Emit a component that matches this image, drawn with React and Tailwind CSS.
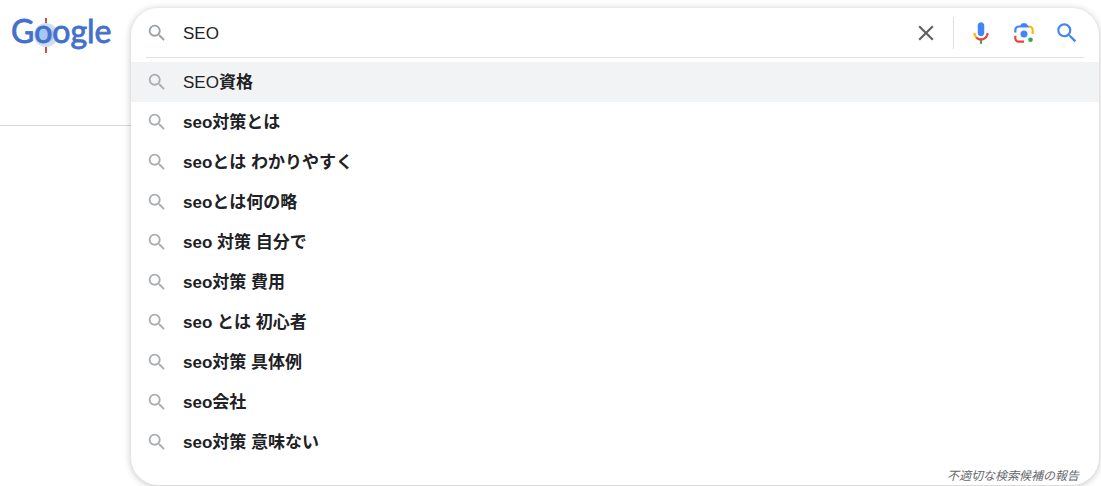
import React, { useState } from 'react';

// "typed" is the part the user entered, "rest" is the completion
const suggestions = [
  { typed: 'SEO', rest: '資格' },
  { rest: 'seo対策とは' },
  { rest: 'seoとは わかりやすく' },
  { rest: 'seoとは何の略' },
  { rest: 'seo 対策 自分で' },
  { rest: 'seo対策 費用' },
  { rest: 'seo とは 初心者' },
  { rest: 'seo対策 具体例' },
  { rest: 'seo会社' },
  { rest: 'seo対策 意味ない' },
];

const SearchIcon = ({ className }) => (
  <svg viewBox="0 0 24 24" className={className} fill="currentColor" aria-hidden="true">
    <path d="M15.5 14h-.79l-.28-.27A6.471 6.471 0 0 0 16 9.5 6.5 6.5 0 1 0 9.5 16c1.61 0 3.09-.59 4.23-1.57l.27.28v.79l5 4.99L20.49 19l-4.99-5zm-6 0C7.01 14 5 11.99 5 9.5S7.01 5 9.5 5 14 7.01 14 9.5 11.99 14 9.5 14z" />
  </svg>
);

const CloseIcon = () => (
  <svg viewBox="0 0 24 24" className="size-[26px]" fill="currentColor" aria-hidden="true">
    <path d="M19 6.41L17.59 5 12 10.59 6.41 5 5 6.41 10.59 12 5 17.59 6.41 19 12 13.41 17.59 19 19 17.59 13.41 12z" />
  </svg>
);

const MicIcon = () => (
  <svg viewBox="0 0 24 24" className="size-[26px]" aria-hidden="true">
    <path fill="#4285f4" d="m12 15c1.66 0 3-1.31 3-2.97v-7.02c0-1.66-1.34-3.01-3-3.01s-3 1.34-3 3.01v7.02c0 1.66 1.34 2.97 3 2.97z" />
    <path fill="#34a853" d="m11 18.08h2v3.92h-2z" />
    <path fill="#fbbc04" d="m7.05 16.87c-1.27-1.33-2.05-2.83-2.05-4.87h2c0 1.45 0.56 2.42 1.47 3.38v0.32l-1.15 1.18z" />
    <path fill="#ea4335" d="m12 16.93a4.97 5.25 0 0 1-3.54-1.55l-1.41 1.49c1.26 1.34 3.02 2.13 4.95 2.13 3.87 0 6.99-2.92 6.99-7h-1.99c0 2.92-2.24 4.93-5 4.93z" />
  </svg>
);

const LensIcon = () => (
  <svg viewBox="0 0 192 192" className="size-[26px]" aria-hidden="true">
    <circle fill="#34a853" cx="144" cy="146" r="17" />
    <circle fill="#4285f4" cx="96" cy="104" r="26" />
    <path fill="#ea4335" d="M24 135.2c0 18.11 14.69 32.8 32.8 32.8H96v-16l-40.1-.1c-8.8 0-15.9-8.19-15.9-17.9v-18H24z" />
    <path fill="#fbbc04" d="M168 72.8c0-18.11-14.69-32.8-32.8-32.8H116l20 16c8.8 0 16 8.29 16 18v30h16z" />
    <path fill="#4285f4" d="M112 24H80L68 40H56.8C38.69 40 24 54.69 24 72.8V92h16V74c0-9.71 7.2-18 16-18h80z" />
  </svg>
);

const Logo = () => (
  <a href="/" className="block" aria-label="Google">
    <svg viewBox="0 0 104 48" className="h-12 w-[104px]">
      <path d="M35 6v35" stroke="#c9504a" strokeWidth="2" />
      <circle cx="35" cy="23" r="12" fill="#cfe0f6" />
      <circle cx="35" cy="23" r="8" fill="#a9c6f2" />
      <text
        x="0"
        y="31"
        fontSize="32"
        fill="#4470c9"
        stroke="#4470c9"
        strokeWidth="0.8"
        className="font-[Lato,sans-serif]"
      >
        Google
      </text>
    </svg>
  </a>
);

const App = () => {
  const [query, setQuery] = useState('SEO');

  return (
    <div className="flex items-start bg-white pr-[2px] pb-px font-['Liberation_Sans','Noto_Sans_CJK_JP',sans-serif] text-[17px] text-[#202124]">
      <header className="h-[126px] shrink-0 border-b border-[#d5d7da] pt-3 pr-4 pl-[11px]">
        <Logo />
      </header>

      {/* Search box with the open suggestion list */}
      <form
        role="search"
        onSubmit={(e) => e.preventDefault()}
        className="mt-2 min-w-0 flex-1 rounded-[27px] bg-white shadow-[0_1px_7px_rgba(32,33,36,0.28)]"
      >
        <div className="mx-[15px] flex h-[50px] items-center border-b border-[#dfe1e5]">
          <SearchIcon className="size-[22px] shrink-0 text-[#9aa0a6]" />
          <input
            type="text"
            aria-label="検索"
            value={query}
            onChange={(e) => setQuery(e.target.value)}
            className="ml-[15px] h-8 min-w-0 flex-1 bg-transparent pt-[2px] outline-none"
          />
          <button type="button" aria-label="クリア" className="text-[#5f6368]" onClick={() => setQuery('')}>
            <CloseIcon />
          </button>
          <div className="ml-[14px] flex h-8 items-center gap-[17px] border-l border-[#dadce0] pr-1 pl-[14px]">
            <button type="button" aria-label="音声検索">
              <MicIcon />
            </button>
            <button type="button" aria-label="画像で検索">
              <LensIcon />
            </button>
            <button type="submit" aria-label="Google 検索">
              <SearchIcon className="size-[26px] text-[#4285f4]" />
            </button>
          </div>
        </div>

        <ul className="pt-1">
          {suggestions.map((item, index) => (
            <li key={item.rest}>
              <button
                type="button"
                className={`flex h-10 w-full items-center gap-[15px] px-[15px] text-left ${index === 0 ? 'bg-[#f1f3f4]' : ''}`}
              >
                <SearchIcon className="size-[22px] shrink-0 text-[#a9adb1]" />
                <span className="pt-[2px]">
                  {item.typed}
                  <b>{item.rest}</b>
                </span>
              </button>
            </li>
          ))}
        </ul>

        <div className="flex justify-end px-5 pt-[6px] pb-px">
          <a href="#report" className="text-xs leading-4 text-[#66696d] italic">
            不適切な検索候補の報告
          </a>
        </div>
      </form>
    </div>
  );
};

export default App;
